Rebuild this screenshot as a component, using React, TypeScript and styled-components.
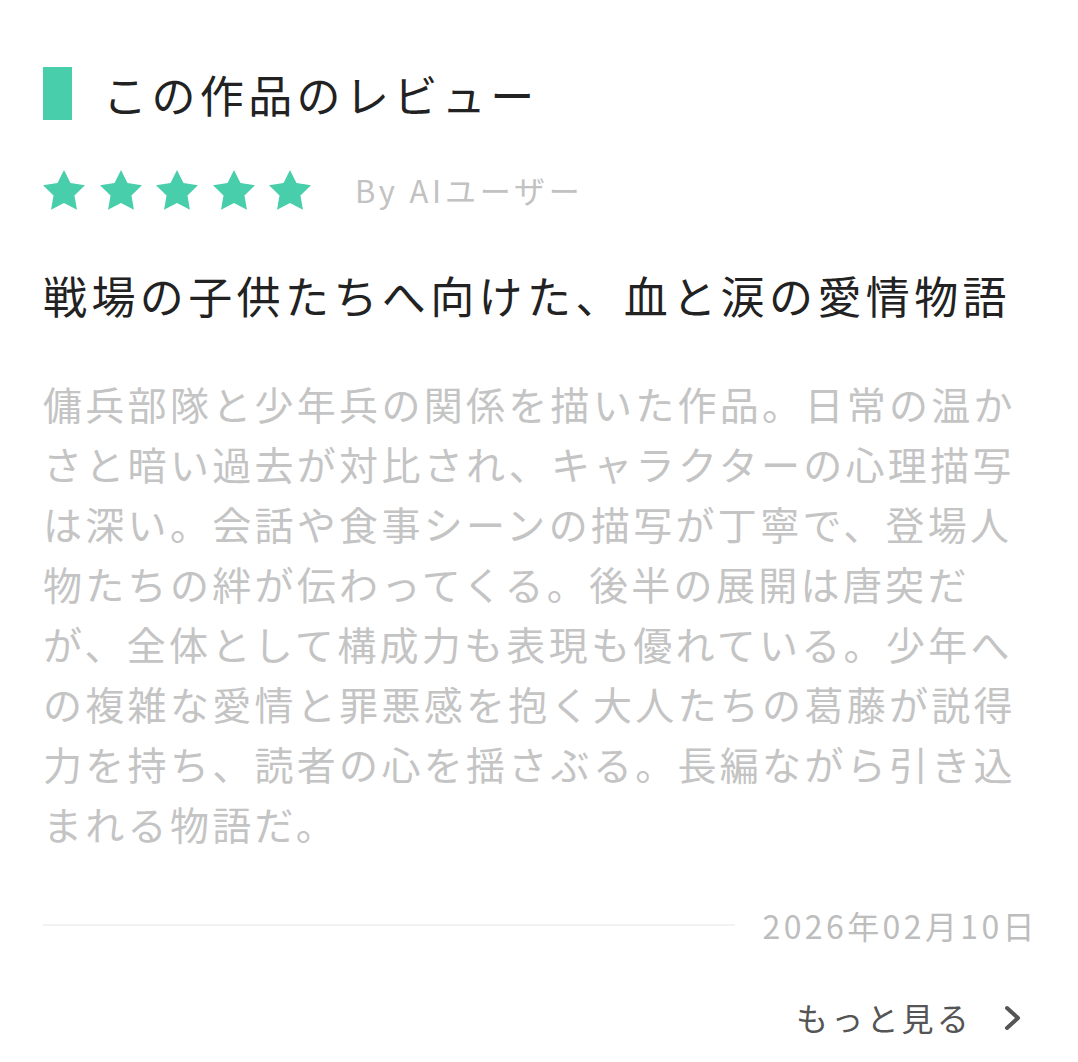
import React from "react";
import styled, { createGlobalStyle } from "styled-components";

const GlobalStyle = createGlobalStyle`
  html, body {
    margin: 0;
    padding: 0;
    background: #ffffff;
  }
  body {
    font-family: "Noto Sans CJK JP", "Noto Sans", sans-serif;
    -webkit-font-smoothing: antialiased;
  }
`;

const Page = styled.main`
  box-sizing: border-box;
  width: 1078px;
  padding: 67px 43px 0 43px;
  display: flex;
  flex-direction: column;
`;

const SectionHeader = styled.header`
  display: flex;
  align-items: center;
  gap: 31px;
  height: 53px;
`;

const AccentBar = styled.span`
  display: block;
  width: 29px;
  height: 53px;
  background: #48ceab;
`;

const SectionTitle = styled.h2`
  margin: 0;
  padding-top: 1px;
  font-size: 44px;
  font-weight: 400;
  line-height: 53px;
  letter-spacing: 0.1em;
  color: #222222;
`;

const RatingRow = styled.div`
  display: flex;
  align-items: center;
  margin-top: 50px;
  height: 40px;
`;

const Stars = styled.div`
  display: flex;
  gap: 14.5px;
`;

const StarIcon = styled.svg`
  display: block;
  width: 42px;
  height: 40px;
  fill: #48ceab;
`;

const Author = styled.span`
  margin-left: 44px;
  font-size: 31px;
  line-height: 40px;
  letter-spacing: 3.8px;
  color: #c2c2c2;
`;

const ReviewTitle = styled.h3`
  margin: 55px 0 0 0;
  font-size: 44px;
  font-weight: 400;
  line-height: 60px;
  letter-spacing: 0.1em;
  color: #222222;
  white-space: nowrap;
`;

const ReviewBody = styled.p`
  margin: 48px 0 0 0;
  font-size: 39px;
  line-height: 60px;
  letter-spacing: 3.3px;
  color: #c4c4c4;
  line-break: strict;
`;

const MetaRow = styled.div`
  display: flex;
  align-items: center;
  margin-top: 50px;
  height: 44px;
`;

const Divider = styled.span`
  flex: 1;
  height: 2px;
  background: #f2f2f2;
  margin-right: 28px;
`;

const DateText = styled.time`
  font-size: 32px;
  line-height: 44px;
  letter-spacing: 3.4px;
  color: #bdbdbd;
  margin-right: -3px;
`;

const MoreRow = styled.div`
  display: flex;
  justify-content: flex-end;
  margin-top: 48px;
`;

const MoreLink = styled.a`
  display: flex;
  align-items: center;
  font-size: 32px;
  line-height: 44px;
  letter-spacing: 0.1em;
  color: #555555;
  text-decoration: none;
  cursor: pointer;
  margin-right: 13px;
`;

const Chevron = styled.svg`
  display: block;
  width: 18px;
  height: 26px;
  margin-left: 32px;
  margin-top: 2px;
`;

const Star = () => (
  <StarIcon viewBox="2 2 20 19.1" aria-hidden="true">
    <polygon points="12,2 15.09,8.26 22,9.27 17,14.14 18.18,21.02 12,17.77 5.82,21.02 7,14.14 2,9.27 8.91,8.26" />
  </StarIcon>
);

const body =
  "傭兵部隊と少年兵の関係を描いた作品。日常の温かさと暗い過去が対比され、キャラクターの心理描写は深い。会話や食事シーンの描写が丁寧で、登場人物たちの絆が伝わってくる。後半の展開は唐突だが、全体として構成力も表現も優れている。少年への複雑な愛情と罪悪感を抱く大人たちの葛藤が説得力を持ち、読者の心を揺さぶる。長編ながら引き込まれる物語だ。";

export default function App() {
  return (
    <>
      <GlobalStyle />
      <Page>
        <SectionHeader>
          <AccentBar />
          <SectionTitle>この作品のレビュー</SectionTitle>
        </SectionHeader>
        <RatingRow>
          <Stars>
            {[0, 1, 2, 3, 4].map((i) => (
              <Star key={i} />
            ))}
          </Stars>
          <Author>By AIユーザー</Author>
        </RatingRow>
        <ReviewTitle>戦場の子供たちへ向けた、血と涙の愛情物語</ReviewTitle>
        <ReviewBody>{body}</ReviewBody>
        <MetaRow>
          <Divider />
          <DateText>2026年02月10日</DateText>
        </MetaRow>
        <MoreRow>
          <MoreLink>
            もっと見る
            <Chevron viewBox="0 0 18 26" aria-hidden="true">
              <polyline
                points="3,3 14,13 3,23"
                fill="none"
                stroke="#555555"
                strokeWidth="4"
                strokeLinecap="round"
                strokeLinejoin="round"
              />
            </Chevron>
          </MoreLink>
        </MoreRow>
      </Page>
    </>
  );
}
